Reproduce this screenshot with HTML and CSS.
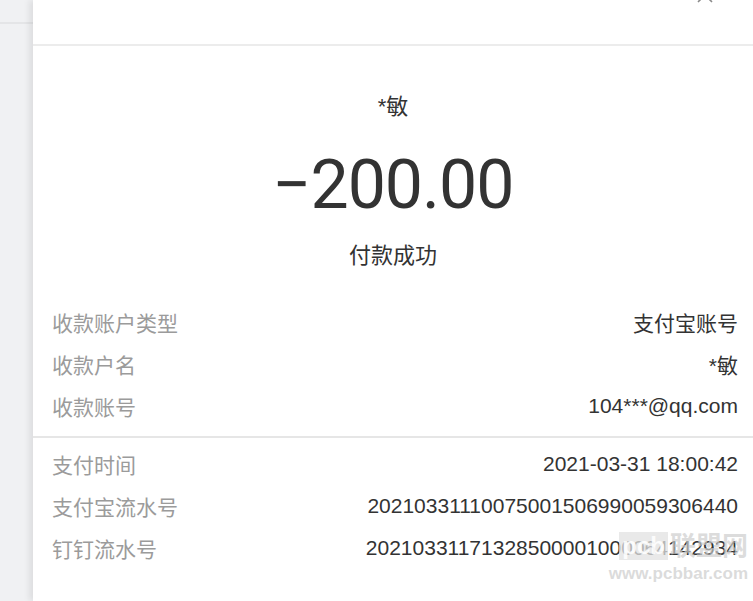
FILE: index.html
```html
<!DOCTYPE html>
<html>
<head>
    <title>付款详情</title>
    <link rel="stylesheet" href="styles.css">
</head>
<body>

    <div class="side">
        <div class="side-line"></div>
    </div>

    <div class="panel">
        <div class="panel-head">
            <svg class="close" width="20" height="20" viewBox="0 0 20 20">
                <path d="M3 3 L17 17 M17 3 L3 17" stroke="#8a8a8a" stroke-width="1.6" fill="none"/>
            </svg>
        </div>

        <div class="summary">
            <div class="payee">*敏</div>
            <div class="amount">−200.00</div>
            <div class="status">付款成功</div>
        </div>

        <div class="section">
            <div class="row"><span class="label">收款账户类型</span><span class="value">支付宝账号</span></div>
            <div class="row"><span class="label">收款户名</span><span class="value">*敏</span></div>
            <div class="row"><span class="label">收款账号</span><span class="value">104***@qq.com</span></div>
        </div>

        <div class="section divided">
            <div class="row"><span class="label">支付时间</span><span class="value">2021-03-31 18:00:42</span></div>
            <div class="row"><span class="label">支付宝流水号</span><span class="value">20210331110075001506990059306440</span></div>
            <div class="row"><span class="label">钉钉流水号</span><span class="value">20210331171328500001000064142934</span></div>
        </div>

        <div class="watermark">
            <div class="wm-brand"><span class="wm-box">pcb</span><span class="wm-cn">联盟网</span></div>
            <div class="wm-url">www.pcbbar.com</div>
        </div>
    </div>

</body>
</html>
```

FILE: styles.css
```css
body {
    margin: 0;
    display: flex;
    min-height: 601px;
    overflow: hidden;
    font-family: "Liberation Sans", "Noto Sans CJK SC", sans-serif;
    background-color: #fff;
}
.side {
    width: 33px;
    flex-shrink: 0;
    background-color: #f0f1f3;
    padding-top: 22px;
}
.side-line {
    height: 2px;
    background: #e4e5e7;
}
.panel {
    flex: 1;
    position: relative;
    background: #fff;
    box-shadow: -4px 0 6px rgba(0,0,0,0.08);
}
.panel-head {
    height: 44px;
    border-bottom: 2px solid #ececec;
    display: flex;
    justify-content: flex-end;
    padding-right: 38px;
}
.close {
    margin-top: -15px;
}
.summary {
    text-align: center;
    color: #333;
    padding-top: 46px;
}
.payee {
    font-size: 22px;
    line-height: 30px;
}
.amount {
    font-family: Roboto, "Liberation Sans", sans-serif;
    font-size: 68px;
    line-height: 80px;
    margin-top: 23px;
    letter-spacing: -1px;
    color: #333;
}
.status {
    font-size: 22px;
    line-height: 30px;
    margin-top: 16px;
}
.section {
    padding: 30px 15px 9px 19px;
}
.section.divided {
    border-top: 2px solid #e6e6e6;
    padding-top: 5px;
}
.row {
    display: flex;
    justify-content: space-between;
    align-items: center;
    height: 42px;
    font-size: 21px;
}
.label {
    color: #9b9b9b;
}
.value {
    color: #333;
}
.watermark {
    position: absolute;
    right: 5px;
    bottom: 16px;
    display: flex;
    flex-direction: column;
    align-items: flex-end;
    font-weight: bold;
    pointer-events: none;
}
.wm-brand {
    display: flex;
    align-items: center;
    gap: 2px;
    height: 30px;
}
.wm-box {
    background: rgba(225,225,225,0.75);
    color: rgba(255,255,255,0.9);
    font-size: 24px;
    line-height: 28px;
    padding: 0 3px;
}
.wm-cn {
    color: rgba(205,205,205,0.7);
    font-size: 26px;
    line-height: 30px;
}
.wm-url {
    color: rgba(210,210,210,0.8);
    font-size: 17px;
    line-height: 22px;
    margin-top: 2px;
}
```
